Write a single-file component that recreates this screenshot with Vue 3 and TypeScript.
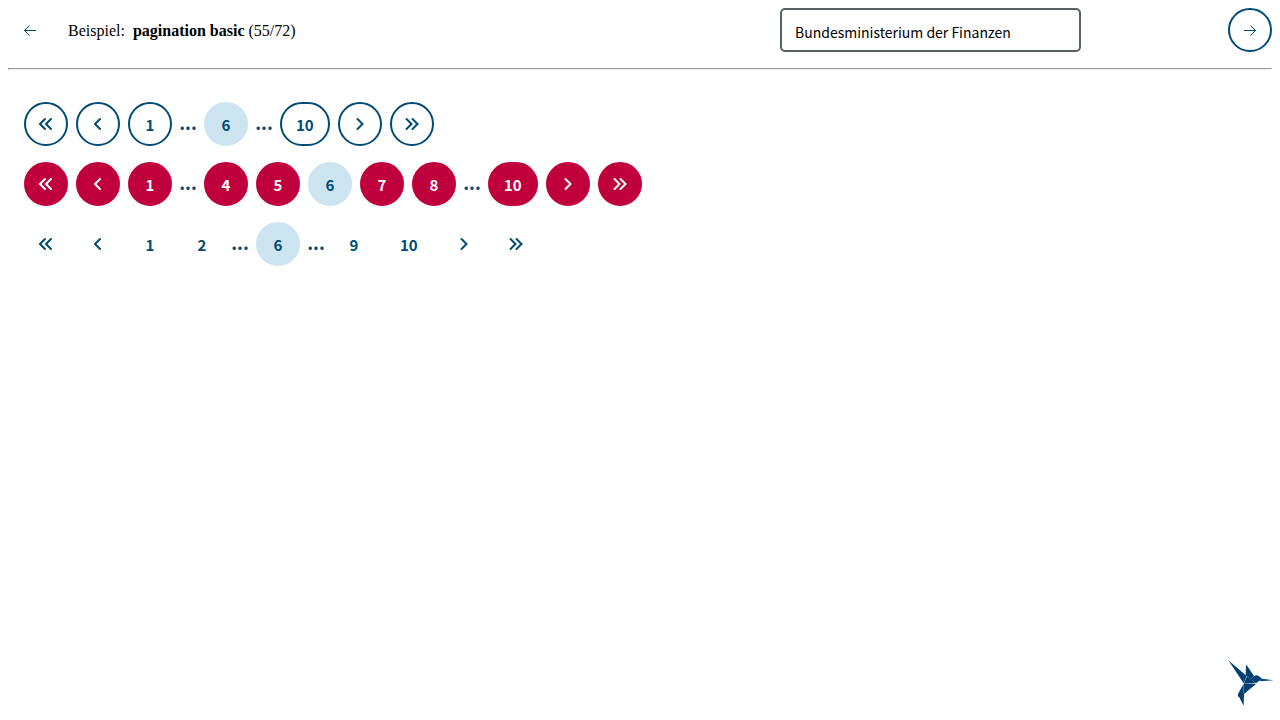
<script setup lang="ts">
import { ref } from 'vue'

type Kind = 'first' | 'prev' | 'next' | 'last' | 'page' | 'gap'
interface Item { kind: Kind; page?: number }
interface Pager { variant: string; items: Item[] }

const current = 6

function build(variant: string, pages: (number | null)[]): Pager {
  return {
    variant,
    items: [
      { kind: 'first' },
      { kind: 'prev' },
      ...pages.map((p): Item => (p === null ? { kind: 'gap' } : { kind: 'page', page: p })),
      { kind: 'next' },
      { kind: 'last' },
    ],
  }
}

const pagers: Pager[] = [
  build('secondary', [1, null, 6, null, 10]),
  build('primary', [1, null, 4, 5, 6, 7, 8, null, 10]),
  build('ghost', [1, 2, null, 6, null, 9, 10]),
]

const icons: Record<string, string> = {
  first: 'M7 3 2 8l5 5M13 3 8 8l5 5',
  prev: 'M10 3 5 8l5 5',
  next: 'M5.500 3 10.500 8l-5 5',
  last: 'M2.500 3 7.500 8l-5 5M8.500 3 13.500 8l-5 5',
}
const labels: Record<string, string> = {
  first: 'Zum Anfang',
  prev: 'Eine Seite zurück',
  next: 'Eine Seite vor',
  last: 'Zum Ende',
}
const theme = ref('bmf')
</script>

<template>
  <div class="app">
    <header class="bar">
      <button class="round plain" type="button" aria-label="Vorheriges Beispiel">
        <svg class="arrow" viewBox="0 0 16 16" aria-hidden="true"><path d="M14 8.500H2.500M7.500 3.500l-5 5 5 5" /></svg>
      </button>
      <div class="title">Beispiel: <strong>pagination basic</strong> (55/72)</div>
      <div class="field">
        <select v-model="theme" class="select" aria-label="Theme">
          <option value="bmf">Bundesministerium der Finanzen</option>
        </select>
      </div>
      <button class="round secondary" type="button" aria-label="Nächstes Beispiel">
        <svg class="arrow" viewBox="0 0 16 16" aria-hidden="true"><path d="M2 8.500h11.500M8.500 3.500l5 5-5 5" /></svg>
      </button>
    </header>
    <hr />
    <main class="content">
      <nav v-for="pager in pagers" :key="pager.variant" class="pager" :aria-label="pager.variant">
        <template v-for="(item, i) in pager.items" :key="i">
          <span v-if="item.kind === 'gap'" class="gap">...</span>
          <button
            v-else-if="item.kind === 'page'"
            type="button"
            class="round"
            :class="item.page === current ? 'current' : pager.variant"
            :disabled="item.page === current"
          >{{ item.page }}</button>
          <button v-else type="button" class="round" :class="pager.variant" :aria-label="labels[item.kind]">
            <svg class="chevron" viewBox="0 0 16 16" aria-hidden="true"><path :d="icons[item.kind]" /></svg>
          </button>
        </template>
      </nav>
    </main>
    <a class="logo" href="#" aria-label="KoliBri">
      <svg viewBox="21 27 144 144" aria-hidden="true">
        <path d="M25 31 80 78 71 100Z" />
        <path d="M78 43 102 78 92 88 77 76Z" />
        <path d="M81 79 107 100 71 101Z" />
        <path d="M91 88 102 79Q109 72 117 79L126 86 108 100Z" />
        <path d="M125 86 161 91 119 94Z" />
        <path d="M72 102 108 102 72 132Z" />
        <path d="M71 101V132L54 141V132Z" />
        <path d="M54 134 72 129 71 167Z" />
      </svg>
    </a>
  </div>
</template>

<style>
body {
  margin: 0;
  background: #fff;
}
</style>

<style scoped>
.app {
  padding: 8px;
  color: #000;
  font: 16px/20px "Liberation Serif", serif;
}
.bar {
  display: flex;
  align-items: center;
}
.title {
  flex: 1;
  margin-left: 16px;
  padding-top: 2px;
}
.title strong {
  margin-left: 4px;
}
.field {
  width: 448px;
}
.select {
  display: block;
  width: 301px;
  height: 44px;
  box-sizing: border-box;
  padding: 4px 13px 0;
  appearance: none;
  border: 2px solid #576164;
  border-radius: 5px;
  background: #fff;
  color: #000;
  font: 14px/24px "Noto Sans CJK SC", "Noto Sans", sans-serif;
}
hr {
  margin: 16px 0 0;
}
.content {
  display: grid;
  gap: 16px;
  padding: 32px 16px;
}
.pager {
  display: flex;
  flex-wrap: wrap;
  align-items: center;
  gap: 8px;
}
.round {
  display: inline-flex;
  align-items: center;
  justify-content: center;
  box-sizing: border-box;
  min-width: 44px;
  height: 44px;
  padding: 2px 14px 0;
  border: 2px solid transparent;
  border-radius: 22px;
  background: transparent;
  color: #004b76;
  font: bold 15px/24px "Noto Sans CJK SC", "Noto Sans", sans-serif;
  cursor: pointer;
}
.round:has(svg) {
  padding: 0;
}
.secondary {
  background: #fff;
  border-color: #004b76;
}
.primary {
  background: #c0003c;
  border-color: #c0003c;
  color: #fff;
}
.current {
  background: #cce4f0;
  border-color: #cce4f0;
  cursor: default;
}
.gap {
  display: flex;
  justify-content: center;
  width: 16px;
  padding-bottom: 4px;
  color: #004b76;
  font: bold 18px/24px "Noto Sans CJK SC", "Noto Sans", sans-serif;
}
svg {
  display: block;
  fill: none;
  stroke: currentColor;
}
.chevron {
  width: 16px;
  height: 16px;
  stroke-width: 2;
  stroke-linecap: round;
}
.arrow {
  width: 16px;
  height: 16px;
  stroke-width: 1;
}
.logo {
  position: fixed;
  right: 5px;
  bottom: 13px;
}
.logo svg {
  width: 48px;
  height: 48px;
  fill: #003f75;
  stroke: none;
}
</style>
